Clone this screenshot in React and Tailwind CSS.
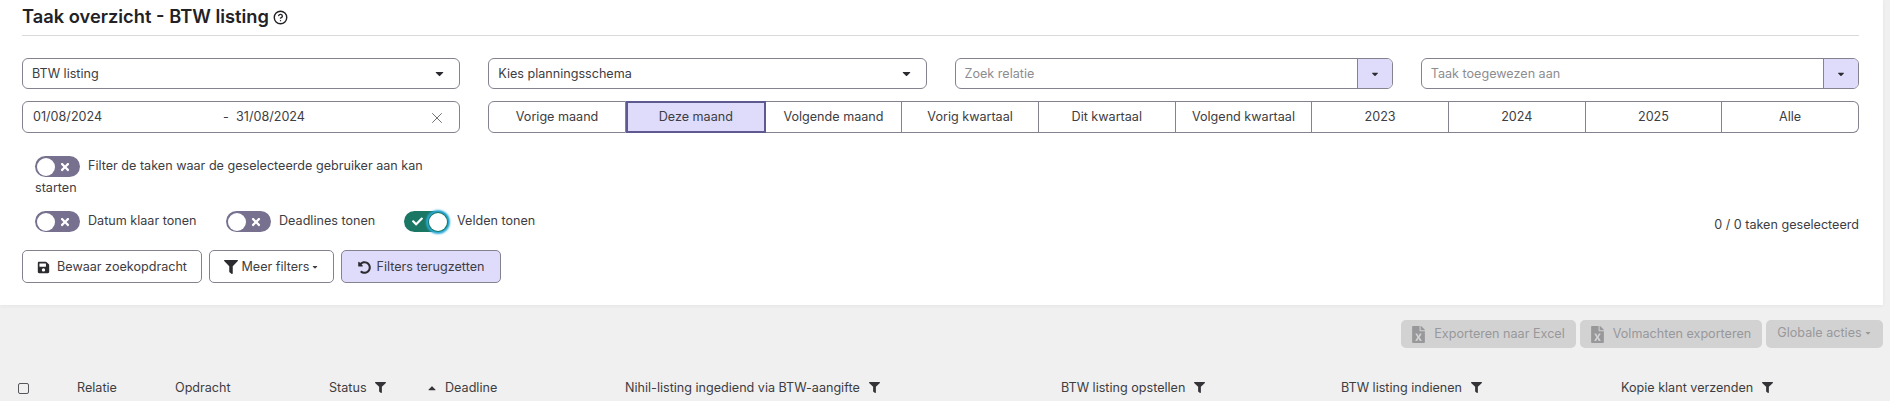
import { CircleHelp, X } from 'lucide-react';
import { FaCaretDown, FaCaretUp, FaCheck, FaFileExcel, FaFilter, FaSave, FaTimes, FaUndoAlt } from 'react-icons/fa';

const ranges = ['Vorige maand', 'Deze maand', 'Volgende maand', 'Vorig kwartaal', 'Dit kwartaal', 'Volgend kwartaal', '2023', '2024', '2025', 'Alle'];

const SelectBox = ({ label }) => (
  <div className="flex h-[31px] items-center justify-between rounded-[6px] border border-[#85828f] bg-white pl-[9px] pr-[13px] text-[#3d3d42]">
    <span className="pt-px">{label}</span>
    <FaCaretDown className="h-[13px] w-[13px] text-[#2b2b30]" />
  </div>
);

const Lookup = ({ placeholder }) => (
  <div className="flex h-[31px] items-stretch rounded-[6px] border border-[#85828f] bg-white">
    <span className="flex flex-1 items-center pl-[9px] pt-px text-[#8d8d90]">{placeholder}</span>
    <span className="flex w-[35px] items-center justify-center rounded-r-[5px] border-l border-[#85828f] bg-[#dfdbfb]">
      <FaCaretDown className="h-[10px] w-[10px] text-[#2b2b30]" />
    </span>
  </div>
);

const Toggle = ({ on }) =>
  on ? (
    <span className="inline-flex h-[21px] w-[45px] shrink-0 items-center justify-between rounded-full bg-[#1a7763] pl-[8px] pr-[2px] align-middle">
      <FaCheck className="h-[11px] w-[11px] text-white" />
      <span className="h-[18px] w-[18px] rounded-full bg-white shadow-[0_0_0_1px_#1a7763,0_0_2px_3px_#29a9d6]" />
    </span>
  ) : (
    <span className="inline-flex h-[21px] w-[45px] shrink-0 items-center justify-between rounded-full bg-[#77708f] pl-[2px] pr-[9px] align-middle">
      <span className="h-[18px] w-[18px] rounded-full bg-white" />
      <FaTimes className="h-[12px] w-[12px] text-white" />
    </span>
  );

const ToggleLabel = ({ on, label }) => (
  <div className="flex items-center gap-2">
    <Toggle on={on} />
    <span>{label}</span>
  </div>
);

const HeadFilter = () => <FaFilter className="h-[11px] w-[11px] text-[#333338]" />;

const DisabledButton = ({ label, width }) => (
  <button className={`flex h-[28px] items-center justify-center gap-[9px] rounded-[5px] bg-[#d2d2d2] text-[#98989b] ${width}`}>
    <FaFileExcel className="h-[17px] w-[13px]" />
    {label}
  </button>
);

export default function App() {
  return (
    <div className="h-[401px] overflow-hidden bg-[#f0f0f0] font-['Inter',sans-serif] text-[12.6px] text-[#3d3d42]">
      {/* filter panel */}
      <div className="h-[305px] w-[1883px] bg-white pl-[22px] pr-[24px] shadow-[0_1px_4px_rgba(0,0,0,0.05)]">
        <div className="flex h-[36px] items-center border-b border-[#d9d9d9] pb-px">
          <h1 className="text-[18.3px] font-semibold text-[#222226]">Taak overzicht - BTW listing</h1>
          <CircleHelp className="ml-[4px] h-[15px] w-[15px] text-[#222226]" strokeWidth={2.25} />
        </div>

        <div className="mt-[22px] grid grid-cols-4 gap-x-[28px] gap-y-[12px]">
          <SelectBox label="BTW listing" />
          <SelectBox label="Kies planningsschema" />
          <Lookup placeholder="Zoek relatie" />
          <Lookup placeholder="Taak toegewezen aan" />

          <div className="flex h-[32px] items-center rounded-[6px] border border-[#85828f] pl-[10px] pr-[13px] pt-px">
            <span className="w-[190px]">01/08/2024</span>
            <span className="w-[13px]">-</span>
            <span className="flex-1">31/08/2024</span>
            <X className="h-[18px] w-[18px] text-[#55555a]" strokeWidth={1.1} />
          </div>

          <div className="col-span-3 flex h-[32px]">
            {ranges.map((r, i) => (
              <div
                key={r}
                className={
                  r === 'Deze maand'
                    ? 'flex flex-1 items-center justify-center border-2 border-[#5e5990] bg-[#dfdbfb] pt-px'
                    : i === 0
                      ? 'flex flex-1 items-center justify-center rounded-l-[6px] border border-[#85828f] pt-px'
                      : i === 9
                        ? 'flex flex-1 items-center justify-center rounded-r-[6px] border border-l-0 border-[#85828f] pt-px'
                        : 'flex flex-1 items-center justify-center border border-l-0 border-[#85828f] pt-px'
                }
              >
                {r}
              </div>
            ))}
          </div>
        </div>

        {/* toggles: the label wraps underneath the switch */}
        <div className="mt-[22px] w-[420px] pl-[13px] leading-[21px]">
          <Toggle />
          <span className="ml-2">Filter de taken waar de geselecteerde gebruiker aan kan starten</span>
        </div>

        <div className="mt-[13px] flex items-center justify-between">
          <div className="flex items-center pl-[13px]">
            <div className="w-[191px]"><ToggleLabel label="Datum klaar tonen" /></div>
            <div className="w-[178px]"><ToggleLabel on={false} label="Deadlines tonen" /></div>
            <ToggleLabel on label="Velden tonen" />
          </div>
          <span className="relative top-[4px]">0 / 0 taken geselecteerd</span>
        </div>

        <div className="mt-[18px] flex gap-[7px]">
          <button className="flex h-[33px] w-[180px] items-center justify-center gap-[7px] rounded-[5px] border border-[#85828f] pt-px">
            <FaSave className="h-[13px] w-[13px] text-[#2b2b30]" />
            Bewaar zoekopdracht
          </button>
          <button className="flex h-[33px] w-[125px] items-center justify-center gap-[3px] rounded-[5px] border border-[#85828f] pt-px">
            <FaFilter className="h-[14px] w-[14px] text-[#2b2b30]" />
            Meer filters
            <FaCaretDown className="-ml-[2px] h-[8px] w-[8px]" />
          </button>
          <button className="flex h-[33px] w-[160px] items-center justify-center gap-[6px] rounded-[5px] border border-[#85828f] bg-[#dfdbfb] pt-px">
            <FaUndoAlt className="h-[13px] w-[13px] text-[#2b2b30]" />
            Filters terugzetten
          </button>
        </div>
      </div>

      {/* export actions */}
      <div className="mt-[15px] flex w-[1883px] justify-end gap-[4px]">
        <DisabledButton label="Exporteren naar Excel" width="w-[175px]" />
        <DisabledButton label="Volmachten exporteren" width="w-[182px]" />
        <button className="flex h-[28px] w-[117px] items-center justify-center gap-[3px] rounded-[5px] bg-[#d2d2d2] pb-[2px] text-[#98989b]">
          Globale acties
          <FaCaretDown className="-ml-[1px] h-[8px] w-[8px]" />
        </button>
      </div>

      {/* table header */}
      <div className="mt-[30px] grid h-[20px] grid-cols-[59px_98px_154px_97px_199px_436px_280px_280px_1fr] items-center pl-[18px]">
        <span className="h-[11px] w-[11px] rounded-[2px] border border-[#55555a]" />
        <span>Relatie</span>
        <span>Opdracht</span>
        <span className="flex items-center gap-[8px]">Status <HeadFilter /></span>
        <span className="flex items-center gap-[7px]">
          <FaCaretUp className="h-[12px] w-[12px] text-[#333338]" />
          Deadline
        </span>
        <span className="flex items-center gap-[9px]">Nihil-listing ingediend via BTW-aangifte <HeadFilter /></span>
        <span className="flex items-center gap-[9px]">BTW listing opstellen <HeadFilter /></span>
        <span className="flex items-center gap-[9px]">BTW listing indienen <HeadFilter /></span>
        <span className="flex items-center gap-[9px]">Kopie klant verzenden <HeadFilter /></span>
      </div>
    </div>
  );
}
